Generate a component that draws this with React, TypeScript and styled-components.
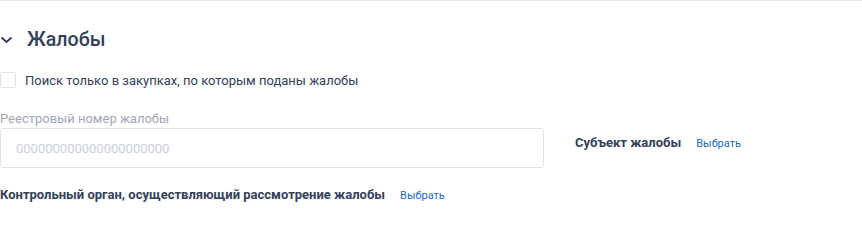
import React from "react";
import styled, { createGlobalStyle } from "styled-components";

const Global = createGlobalStyle`
  html, body { margin: 0; padding: 0; background: #fff; }
  body { font-family: Roboto, "Noto Sans", Arial, sans-serif; color: #334059; }
  * { box-sizing: border-box; }
`;

const Section = styled.section`
  width: 862px;
  border-top: 1px solid #e3e8ef;
  padding-top: 24px;
`;

const Header = styled.div`
  display: flex;
  align-items: center;
  gap: 14px;
  height: 28px;
`;

const Chevron = styled.svg`
  width: 13px;
  height: 13px;
  display: block;
`;

const Title = styled.h2`
  margin: 0;
  font-size: 19.6px;
  font-weight: 500;
  color: #334059;
`;

const CheckRow = styled.label`
  display: flex;
  align-items: center;
  gap: 9px;
  margin-top: 19px;
  font-size: 13px;
  color: #334059;
`;

const Box = styled.span`
  width: 16px;
  height: 16px;
  border: 1px solid #dde2ea;
  border-radius: 2px;
  background: #fff;
`;

const FieldRow = styled.div`
  display: flex;
  align-items: flex-end;
  margin-top: 23px;
`;

const Field = styled.div`
  display: flex;
  flex-direction: column;
  gap: 1px;
  width: 544px;
`;

const FieldLabel = styled.span`
  font-size: 13px;
  color: #9ea7b7;
  line-height: 16px;
`;

const Input = styled.input`
  height: 40px;
  width: 100%;
  border: 1px solid #dde2ea;
  border-radius: 3px;
  padding: 0 15px;
  font-family: Roboto, Arial, sans-serif;
  font-size: 13px;
  color: #334059;
  outline: none;
  &::placeholder { color: #c9cfd9; }
`;

const Picker = styled.div`
  display: flex;
  align-items: baseline;
  gap: 15px;
`;

const PickerTitle = styled.span`
  font-size: 13px;
  font-weight: 700;
  color: #334059;
`;

const Choose = styled.a`
  font-size: 11px;
  color: #1a6ac9;
  text-decoration: none;
  cursor: pointer;
`;

const SubjectWrap = styled.div`
  height: 40px;
  display: flex;
  align-items: center;
  padding-bottom: 12px;
  margin-left: 31px;
`;

const Bottom = styled.div`
  margin-top: 19px;
`;

export default function App() {
  return (
    <>
      <Global />
      <Section>
        <Header>
          <Chevron viewBox="0 0 13 13">
            <path d="M1.5 4.5 L6.5 9 L11.5 4.5" fill="none" stroke="#334059" strokeWidth="2" />
          </Chevron>
          <Title>Жалобы</Title>
        </Header>
        <CheckRow>
          <Box />
          Поиск только в закупках, по которым поданы жалобы
        </CheckRow>
        <FieldRow>
          <Field>
            <FieldLabel>Реестровый номер жалобы</FieldLabel>
            <Input placeholder="000000000000000000000" />
          </Field>
          <SubjectWrap>
            <Picker>
              <PickerTitle>Субъект жалобы</PickerTitle>
              <Choose>Выбрать</Choose>
            </Picker>
          </SubjectWrap>
        </FieldRow>
        <Bottom>
          <Picker>
            <PickerTitle>Контрольный орган, осуществляющий рассмотрение жалобы</PickerTitle>
            <Choose>Выбрать</Choose>
          </Picker>
        </Bottom>
      </Section>
    </>
  );
}
